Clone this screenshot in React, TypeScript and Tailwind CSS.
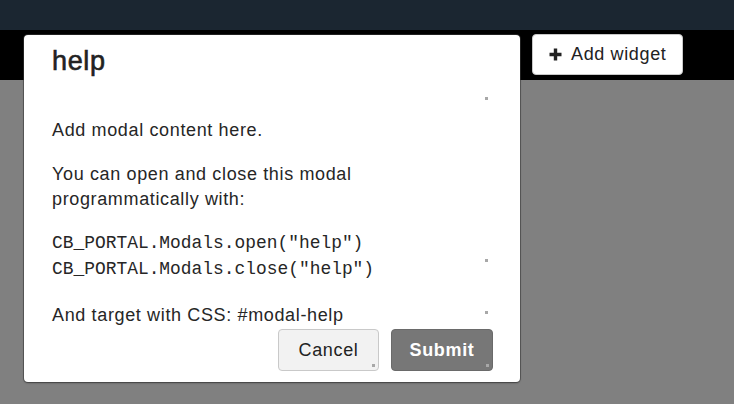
function Grip({ className }: { className: string }) {
  return <span className={"absolute w-[3px] h-[3px] bg-[#a8a8a8] " + className}></span>;
}

export default function App() {
  return (
    <div className="relative w-[734px] h-[404px] overflow-hidden bg-[#808080] font-['Liberation_Sans',Arial,sans-serif] tracking-[0.04em] text-[#262626]">
      {/* Top nav */}
      <div className="h-[30px] bg-[#1b2631]"></div>
      {/* Toolbar */}
      <div className="h-[50px] bg-black flex items-start pl-[532px] pt-[4px]">
        <button className="w-[151px] h-[41px] bg-white border border-[#c8c8c8] rounded-[4px] flex items-center pl-[15px] gap-[8px] text-[18px] text-[#222]">
          <svg width="15" height="15" viewBox="0 0 15 15">
            <path d="M7.5 1.5v12M1.5 7.5h12" stroke="#222" strokeWidth="3.4" />
          </svg>
          <span>Add widget</span>
        </button>
      </div>

      {/* Modal */}
      <div className="absolute left-[24px] top-[35px] w-[496px] h-[347px] bg-white rounded-[4px] shadow-[0_0_0_1px_rgba(60,60,60,0.55),0_1px_2px_rgba(0,0,0,0.4)] flex flex-col">
        <Grip className="left-[461px] top-[62px]" />
        <Grip className="left-[461px] top-[224px]" />
        <Grip className="left-[461px] top-[276px]" />

        <div className="h-[66px] pl-[28px] pt-[10px]">
          <h2 className="text-[27px] leading-[32px] font-normal text-[#222] [-webkit-text-stroke:0.6px_#222]">help</h2>
        </div>

        <div className="pl-[28px] text-[18px] leading-[25px]">
          <p className="mt-[17px]">Add modal content here.</p>
          <p className="mt-[19px]">
            You can open and close this modal
            <br />
            programmatically with:
          </p>
          <div className="mt-[18px] font-['Liberation_Mono',Menlo,monospace] text-[17.9px] leading-[26px] tracking-normal">
            <div>CB_PORTAL.Modals.open("help")</div>
            <div>CB_PORTAL.Modals.close("help")</div>
          </div>
          <p className="mt-[21px]">And target with CSS: #modal-help</p>
        </div>

        <div className="mt-auto flex justify-end gap-[12px] pr-[27px] pb-[11px]">
          <button className="relative w-[101px] h-[42px] bg-[#f2f2f2] border border-[#c9c9c9] rounded-[4px] text-[18px] text-[#222]">
            Cancel
            <Grip className="right-[3px] bottom-[3px] bg-[#8a8a8a]" />
          </button>
          <button className="relative w-[102px] h-[42px] bg-[#777777] border border-[#6a6a6a] rounded-[4px] text-[18px] font-bold text-white">
            Submit
            <Grip className="right-[3px] bottom-[3px] bg-[#333]" />
          </button>
        </div>
      </div>
    </div>
  );
}
